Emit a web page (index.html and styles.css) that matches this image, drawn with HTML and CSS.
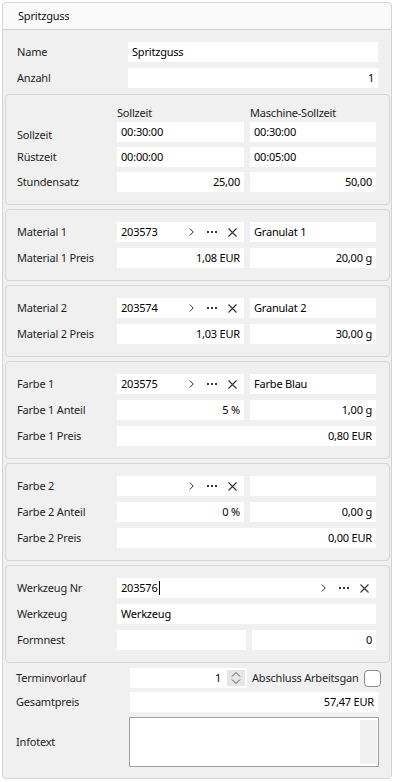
FILE: index.html
```html
<!DOCTYPE html>
<html lang="de">
<head>
<meta charset="UTF-8" />
<title>Spritzguss</title>
<link rel="stylesheet" href="styles.css">
</head>
<body>

<div class="panel">
  <div class="panel-head">Spritzguss</div>

  <div class="panel-body">

    <div class="top">
      <div class="row">
        <span class="lbl">Name</span>
        <div class="field">Spritzguss</div>
      </div>
      <div class="row">
        <span class="lbl">Anzahl</span>
        <div class="field num">1</div>
      </div>
    </div>

    <!-- Zeiten -->
    <div class="group group-time">
      <div class="row colhead">
        <span></span>
        <span class="colname">Sollzeit</span>
        <span class="colname">Maschine-Sollzeit</span>
      </div>
      <div class="row">
        <span class="lbl low">Sollzeit</span>
        <div class="field">00:30:00</div>
        <div class="field">00:30:00</div>
      </div>
      <div class="row">
        <span class="lbl">Rüstzeit</span>
        <div class="field">00:00:00</div>
        <div class="field">00:05:00</div>
      </div>
      <div class="row">
        <span class="lbl">Stundensatz</span>
        <div class="field num">25,00</div>
        <div class="field num">50,00</div>
      </div>
    </div>

    <!-- Material 1 -->
    <div class="group">
      <div class="row">
        <span class="lbl">Material 1</span>
        <div class="field lookup">
          <span class="val">203573</span>
          <svg class="ico chev" width="5" height="8" viewBox="0 0 5 8"><path d="M0.8 0.5 L4.2 4 L0.8 7.5" fill="none" stroke="#333" stroke-width="1"/></svg>
          <svg class="ico dots" width="10" height="2" viewBox="0 0 10 2"><rect x="0" y="0" width="2" height="2" fill="#333"/><rect x="4" y="0" width="2" height="2" fill="#333"/><rect x="8" y="0" width="2" height="2" fill="#333"/></svg>
          <svg class="ico cross" width="9" height="9" viewBox="0 0 9 9"><path d="M0.5 0.5 L8.5 8.5 M8.5 0.5 L0.5 8.5" stroke="#333" stroke-width="1.1"/></svg>
        </div>
        <div class="field">Granulat 1</div>
      </div>
      <div class="row">
        <span class="lbl">Material 1 Preis</span>
        <div class="field num">1,08 EUR</div>
        <div class="field num">20,00 g</div>
      </div>
    </div>

    <!-- Material 2 -->
    <div class="group">
      <div class="row">
        <span class="lbl">Material 2</span>
        <div class="field lookup">
          <span class="val">203574</span>
          <svg class="ico chev" width="5" height="8" viewBox="0 0 5 8"><path d="M0.8 0.5 L4.2 4 L0.8 7.5" fill="none" stroke="#333" stroke-width="1"/></svg>
          <svg class="ico dots" width="10" height="2" viewBox="0 0 10 2"><rect x="0" y="0" width="2" height="2" fill="#333"/><rect x="4" y="0" width="2" height="2" fill="#333"/><rect x="8" y="0" width="2" height="2" fill="#333"/></svg>
          <svg class="ico cross" width="9" height="9" viewBox="0 0 9 9"><path d="M0.5 0.5 L8.5 8.5 M8.5 0.5 L0.5 8.5" stroke="#333" stroke-width="1.1"/></svg>
        </div>
        <div class="field">Granulat 2</div>
      </div>
      <div class="row">
        <span class="lbl">Material 2 Preis</span>
        <div class="field num">1,03 EUR</div>
        <div class="field num">30,00 g</div>
      </div>
    </div>

    <!-- Farbe 1 -->
    <div class="group">
      <div class="row">
        <span class="lbl">Farbe 1</span>
        <div class="field lookup">
          <span class="val">203575</span>
          <svg class="ico chev" width="5" height="8" viewBox="0 0 5 8"><path d="M0.8 0.5 L4.2 4 L0.8 7.5" fill="none" stroke="#333" stroke-width="1"/></svg>
          <svg class="ico dots" width="10" height="2" viewBox="0 0 10 2"><rect x="0" y="0" width="2" height="2" fill="#333"/><rect x="4" y="0" width="2" height="2" fill="#333"/><rect x="8" y="0" width="2" height="2" fill="#333"/></svg>
          <svg class="ico cross" width="9" height="9" viewBox="0 0 9 9"><path d="M0.5 0.5 L8.5 8.5 M8.5 0.5 L0.5 8.5" stroke="#333" stroke-width="1.1"/></svg>
        </div>
        <div class="field">Farbe Blau</div>
      </div>
      <div class="row">
        <span class="lbl">Farbe 1 Anteil</span>
        <div class="field num">5 %</div>
        <div class="field num">1,00 g</div>
      </div>
      <div class="row">
        <span class="lbl">Farbe 1 Preis</span>
        <div class="field num wide">0,80 EUR</div>
      </div>
    </div>

    <!-- Farbe 2 -->
    <div class="group">
      <div class="row">
        <span class="lbl">Farbe 2</span>
        <div class="field lookup">
          <span class="val"></span>
          <svg class="ico chev" width="5" height="8" viewBox="0 0 5 8"><path d="M0.8 0.5 L4.2 4 L0.8 7.5" fill="none" stroke="#333" stroke-width="1"/></svg>
          <svg class="ico dots" width="10" height="2" viewBox="0 0 10 2"><rect x="0" y="0" width="2" height="2" fill="#333"/><rect x="4" y="0" width="2" height="2" fill="#333"/><rect x="8" y="0" width="2" height="2" fill="#333"/></svg>
          <svg class="ico cross" width="9" height="9" viewBox="0 0 9 9"><path d="M0.5 0.5 L8.5 8.5 M8.5 0.5 L0.5 8.5" stroke="#333" stroke-width="1.1"/></svg>
        </div>
        <div class="field"></div>
      </div>
      <div class="row">
        <span class="lbl">Farbe 2 Anteil</span>
        <div class="field num">0 %</div>
        <div class="field num">0,00 g</div>
      </div>
      <div class="row">
        <span class="lbl">Farbe 2 Preis</span>
        <div class="field num wide">0,00 EUR</div>
      </div>
    </div>

    <!-- Werkzeug -->
    <div class="group group-tool">
      <div class="row">
        <span class="lbl">Werkzeug Nr</span>
        <div class="field lookup wide">
          <span class="val">203576<span class="caret"></span></span>
          <svg class="ico chev" width="5" height="8" viewBox="0 0 5 8"><path d="M0.8 0.5 L4.2 4 L0.8 7.5" fill="none" stroke="#333" stroke-width="1"/></svg>
          <svg class="ico dots" width="10" height="2" viewBox="0 0 10 2"><rect x="0" y="0" width="2" height="2" fill="#333"/><rect x="4" y="0" width="2" height="2" fill="#333"/><rect x="8" y="0" width="2" height="2" fill="#333"/></svg>
          <svg class="ico cross" width="9" height="9" viewBox="0 0 9 9"><path d="M0.5 0.5 L8.5 8.5 M8.5 0.5 L0.5 8.5" stroke="#333" stroke-width="1.1"/></svg>
        </div>
      </div>
      <div class="row">
        <span class="lbl">Werkzeug</span>
        <div class="field wide">Werkzeug</div>
      </div>
      <div class="row">
        <span class="lbl">Formnest</span>
        <div class="field"></div>
        <div class="field num">0</div>
      </div>
    </div>

    <div class="bottom">
      <div class="row">
        <span class="lbl">Terminvorlauf</span>
        <div class="field spin">
          <span class="val">1</span>
          <span class="spin-btn">
            <svg width="10" height="14" viewBox="0 0 10 14"><path d="M1 5.5 L5 1.5 L9 5.5 M1 8.5 L5 12.5 L9 8.5" fill="none" stroke="#555" stroke-width="1"/></svg>
          </span>
        </div>
        <div class="check-cell">
          <span class="check-lbl">Abschluss Arbeitsgan</span>
          <span class="checkbox"></span>
        </div>
      </div>
      <div class="row">
        <span class="lbl">Gesamtpreis</span>
        <div class="field num wide">57,47 EUR</div>
      </div>
      <div class="row info">
        <span class="lbl">Infotext</span>
        <div class="textarea wide"><span class="scroll"></span></div>
      </div>
    </div>

  </div>
</div>

</body>
</html>
```

FILE: styles.css
```css
body {
  margin: 0;
  background: #ffffff;
  font-family: "Noto Sans", "Open Sans", sans-serif;
  font-size: 11px;
  letter-spacing: -0.2px;
  color: #1f1f1f;
}

.panel {
  margin: 2px 0 0 2px;
  width: 390px;
  box-sizing: border-box;
  border: 1px solid #d3d3d3;
  border-radius: 4px;
  background: #f0f0f0;
}
.panel-head {
  height: 26px;
  line-height: 26px;
  padding-left: 15px;
  background: #f9f9f9;
  border-bottom: 1px solid #d3d3d3;
  border-radius: 4px 4px 0 0;
  color: #111;
}
.panel-body {
  padding: 12px 1px 11px 2px;
}

.row {
  display: grid;
  height: 20px;
  line-height: 20px;
  column-gap: 6px;
}
.lbl {
  white-space: nowrap;
}
.low {
  position: relative;
  top: 3px;
}

.field {
  background: #ffffff;
  height: 20px;
  padding: 0 4px;
  box-sizing: border-box;
  color: #000;
  white-space: nowrap;
  overflow: hidden;
}
.num {
  text-align: right;
}
.wide {
  grid-column: 2 / 4;
}

/* Kopfbereich */
.top {
  display: flex;
  flex-direction: column;
  gap: 6px;
  padding: 0 12px 0 12px;
}
.top .row {
  grid-template-columns: 111px 1fr;
  column-gap: 0;
}

/* Gruppen */
.group {
  margin-top: 4px;
  border: 1px solid #d6d6d6;
  border-radius: 4px;
  padding: 12px 12px 12px 11px;
  display: flex;
  flex-direction: column;
  gap: 6px;
}
.group .row {
  grid-template-columns: 94px 127px 126px;
}
.group-time {
  margin-top: 6px;
  gap: 5px;
}
.colhead {
  height: 10px;
  line-height: 12px;
}
.colname {
  color: #222;
}
.group-tool .row {
  grid-template-columns: 94px 129px 124px;
}

/* Nachschlagefeld */
.lookup {
  display: flex;
  align-items: center;
  padding-right: 7px;
}
.lookup .val {
  flex: 1;
}
.ico {
  display: block;
  flex: none;
}
.chev {
  margin-right: 13px;
}
.dots {
  margin-right: 11px;
}
.caret {
  display: inline-block;
  width: 1px;
  height: 14px;
  margin-left: 1px;
  background: #000;
  vertical-align: -3px;
}

/* Unterer Bereich */
.bottom {
  margin-top: 5px;
  padding: 0 12px 0 11px;
  display: flex;
  flex-direction: column;
  gap: 4px;
}
.bottom .row {
  grid-template-columns: 114px 117px 1fr;
  column-gap: 0;
}
.spin {
  display: flex;
  align-items: center;
  padding-right: 2px;
}
.spin .val {
  flex: 1;
  text-align: right;
  padding-right: 6px;
}
.spin-btn {
  width: 18px;
  height: 16px;
  background: #e6e6e6;
  display: flex;
  align-items: center;
  justify-content: center;
}
.spin-btn svg {
  display: block;
}
.check-cell {
  display: flex;
  align-items: center;
  padding-left: 5px;
  margin-right: -3px;
}
.check-lbl {
  flex: 1;
  white-space: nowrap;
}
.checkbox {
  width: 17px;
  height: 17px;
  box-sizing: border-box;
  border: 1px solid #8c8c8c;
  border-radius: 4px;
  background: #fff;
}
.info {
  height: 50px;
  margin-top: 1px;
}
.info .lbl {
  line-height: 50px;
}
.textarea {
  margin-left: -1px;
  margin-right: -1px;
  height: 50px;
  box-sizing: border-box;
  border: 1px solid #a0a0a0;
  background: #fff;
  display: flex;
  justify-content: flex-end;
  padding: 2px 1px;
}
.scroll {
  width: 17px;
  background: #f0f0f0;
}
```
